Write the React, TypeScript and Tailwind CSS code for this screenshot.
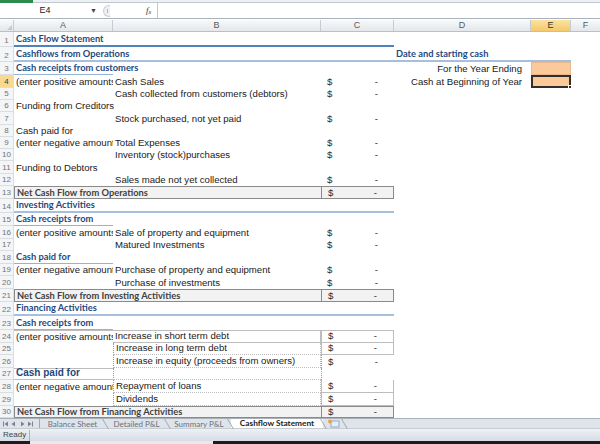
import React from 'react';

type Kind = 'h1' | 'h2' | 'h3' | 'total' | 'plain' | 'big';

interface RowDef {
  n: number;
  h: string;
  kind: Kind;
  a?: string;
  b?: string;
  money?: boolean;
  boxB?: 'solid' | 'dotted';
  boxC?: 'solid' | 'dotted';
  topA?: boolean;
}

const ROWS: RowDef[] = [
  { n: 1, h: 'h-[15px]', kind: 'h1', a: 'Cash Flow Statement' },
  { n: 2, h: 'h-[15px]', kind: 'h2', a: 'Cashflows from Operations' },
  { n: 3, h: 'h-[13px]', kind: 'h3', a: 'Cash receipts from customers' },
  { n: 4, h: 'h-[13px]', kind: 'plain', a: '(enter positive amounts)', b: 'Cash Sales', money: true },
  { n: 5, h: 'h-[12px]', kind: 'plain', b: 'Cash collected from customers (debtors)', money: true },
  { n: 6, h: 'h-[12px]', kind: 'plain', a: 'Funding from Creditors' },
  { n: 7, h: 'h-[13px]', kind: 'plain', b: 'Stock purchased, not yet paid', money: true },
  { n: 8, h: 'h-[12px]', kind: 'plain', a: 'Cash paid for' },
  { n: 9, h: 'h-[12px]', kind: 'plain', a: '(enter negative amounts)', b: 'Total Expenses', money: true },
  { n: 10, h: 'h-[12px]', kind: 'plain', b: 'Inventory (stock)purchases', money: true },
  { n: 11, h: 'h-[13px]', kind: 'plain', a: 'Funding to Debtors' },
  { n: 12, h: 'h-[12px]', kind: 'plain', b: 'Sales made not yet collected', money: true },
  { n: 13, h: 'h-[13px]', kind: 'total', a: 'Net Cash Flow from Operations' },
  { n: 14, h: 'h-[14px]', kind: 'h2', a: 'Investing Activities' },
  { n: 15, h: 'h-[13px]', kind: 'h3', a: 'Cash receipts from' },
  { n: 16, h: 'h-[13px]', kind: 'plain', a: '(enter positive amounts)', b: 'Sale of property and equipment', money: true },
  { n: 17, h: 'h-[12px]', kind: 'plain', b: 'Matured Investments', money: true },
  { n: 18, h: 'h-[13px]', kind: 'h3', a: 'Cash paid for' },
  { n: 19, h: 'h-[12px]', kind: 'plain', a: '(enter negative amounts)', b: 'Purchase of property and equipment', money: true },
  { n: 20, h: 'h-[13px]', kind: 'plain', b: 'Purchase of investments', money: true },
  { n: 21, h: 'h-[13px]', kind: 'total', a: 'Net Cash Flow from Investing Activities' },
  { n: 22, h: 'h-[14px]', kind: 'h2', a: 'Financing Activities' },
  { n: 23, h: 'h-[14px]', kind: 'h3', a: 'Cash receipts from' },
  { n: 24, h: 'h-[13px]', kind: 'plain', a: '(enter positive amounts)', b: 'Increase in short term debt', money: true, boxB: 'solid', boxC: 'solid', topA: true },
  { n: 25, h: 'h-[12px]', kind: 'plain', b: 'Increase in long term debt', money: true, boxB: 'solid', boxC: 'solid' },
  { n: 26, h: 'h-[13px]', kind: 'plain', b: 'Increase in equity (proceeds from owners)', money: true, boxB: 'solid', boxC: 'dotted' },
  { n: 27, h: 'h-[12px]', kind: 'big', a: 'Cash paid for', boxB: 'dotted', boxC: 'dotted' },
  { n: 28, h: 'h-[13px]', kind: 'plain', a: '(enter negative amounts)', b: 'Repayment of loans', money: true, boxB: 'solid', boxC: 'solid' },
  { n: 29, h: 'h-[13px]', kind: 'plain', b: 'Dividends', money: true, boxB: 'solid', boxC: 'solid' },
  { n: 30, h: 'h-[12px]', kind: 'total', a: 'Net Cash Flow from Financing Activities' },
];

const ARIAL = "font-['Liberation_Sans',Arial,sans-serif]";
const CALIBRI = "font-['Lato','Open_Sans',sans-serif]";

function Money() {
  return (
    <div className={`flex w-full items-end justify-between text-[9.6px] leading-[11px] text-[#2b2b2b] ${ARIAL}`}>
      <span className="pl-[6px]">$</span>
      <span className="pr-[16px]">-</span>
    </div>
  );
}

function RowHeader({ n, h }: { n: number; h: string }) {
  const active = n === 4;
  return (
    <div
      className={`${h} flex w-[14px] shrink-0 items-end justify-center border-b border-r border-[#dadde1] pb-[1px] text-[8px] leading-[9px] ${ARIAL} ${
        active ? 'bg-[#f8d98f] text-[#3b3b3b]' : 'bg-[#f4f5f7] text-[#6f747a]'
      }`}
    >
      {n}
    </div>
  );
}

function SheetRow({ r }: { r: RowDef }) {
  if (r.kind === 'total') {
    return (
      <div className="flex">
        <RowHeader n={r.n} h={r.h} />
        <div
          className={`${r.h} flex w-[307px] shrink-0 items-end whitespace-nowrap border-y border-l border-[#8a8a8a] bg-[#f2f2f2] pl-[2px] text-[9.3px] font-bold leading-[11px] text-[#3f3f3f] ${CALIBRI}`}
        >
          {r.a}
        </div>
        <div className={`${r.h} flex w-[73px] shrink-0 items-end border border-[#8a8a8a] bg-[#f2f2f2]`}>
          <Money />
        </div>
      </div>
    );
  }

  const heading = r.kind === 'h1' || r.kind === 'h2' || r.kind === 'h3';
  const aText = heading
    ? `text-[9.3px] font-bold text-[#1f497d] ${CALIBRI} overflow-visible relative z-10`
    : r.kind === 'big'
    ? `text-[10px] font-bold text-[#1f497d] ${ARIAL}`
    : `text-[9.6px] text-[#1a1a1a] ${ARIAL} ${r.b ? 'overflow-hidden' : 'overflow-visible relative z-10'}`;

  // heading lines sit inside every cell so the row keeps its height
  const line =
    r.kind === 'h1' ? 'border-b-2 border-[#4f81bd]' : r.kind === 'h2' ? 'border-b-2 border-[#a7bfde]' : '';

  const aBorder =
    r.kind === 'h3'
      ? 'border-b border-[#95b3d7]'
      : r.kind === 'big'
      ? 'border-y border-[#bdbdbd]'
      : r.topA
      ? 'border-t border-[#bdbdbd]'
      : '';

  const bBorder =
    r.boxB === 'solid'
      ? `border-b border-r border-[#bdbdbd] ${r.n === 24 ? 'border-t' : ''}`
      : r.boxB === 'dotted'
      ? 'border-b border-[#bdbdbd]'
      : '';

  const bLeft = r.boxB && r.n !== 24 ? 'border-l border-dotted border-l-[#9a9a9a]' : '';

  const cBorder =
    r.boxC === 'solid'
      ? `border-x border-b border-[#bdbdbd] ${r.n === 24 ? 'border-t' : ''}`
      : r.boxC === 'dotted'
      ? 'border-l border-dotted border-[#9a9a9a]'
      : '';

  return (
    <div className="flex">
      <RowHeader n={r.n} h={r.h} />
      <div
        className={`${r.h} flex w-[99px] shrink-0 items-end whitespace-nowrap pb-[1px] pl-[2px] leading-[11px] ${aText} ${aBorder} ${line}`}
      >
        {r.a}
      </div>
      <div
        className={`${r.h} flex w-[208px] shrink-0 items-end whitespace-nowrap pb-[1px] pl-[2px] text-[9.6px] leading-[11px] text-[#1a1a1a] ${ARIAL} ${bBorder} ${bLeft} ${line}`}
      >
        {r.b}
      </div>
      <div className={`${r.h} flex w-[73px] shrink-0 items-end pb-[1px] ${cBorder} ${line}`}>{r.money && <Money />}</div>
      <RightSide r={r} />
    </div>
  );
}

function RightSide({ r }: { r: RowDef }) {
  if (r.n === 2) {
    return (
      <div className={`${r.h} flex w-[177px] shrink-0 items-end border-b-2 border-[#a7bfde] pb-[1px] pl-[2px]`}>
        <span className={`text-[9.3px] font-bold leading-[11px] text-[#1f497d] ${CALIBRI}`}>Date and starting cash</span>
      </div>
    );
  }
  if (r.n === 3 || r.n === 4) {
    const label = r.n === 3 ? 'For the Year Ending' : 'Cash at Beginning of Year';
    return (
      <div className="flex">
        <div
          className={`${r.h} flex w-[137px] shrink-0 items-end justify-end pb-[1px] pr-[9px] text-[9.6px] leading-[11px] text-[#1a1a1a] ${ARIAL}`}
        >
          {label}
        </div>
        {r.n === 3 ? (
          <div className={`${r.h} w-[40px] shrink-0 border border-[#e9b98c] bg-[#fcc99b]`} />
        ) : (
          <div className={`${r.h} relative w-[40px] shrink-0 border-2 border-[#2f2f2f] bg-[#fcc99b]`}>
            <div className="absolute -bottom-[3px] -right-[3px] h-[4px] w-[4px] border border-white bg-[#2f2f2f]" />
          </div>
        )}
      </div>
    );
  }
  return null;
}

function NavArrows() {
  return (
    <svg width="38" height="10" viewBox="0 0 38 10" className="shrink-0">
      <rect x="3" y="2.5" width="1" height="5" fill="#7b838c" />
      <path d="M8 2.5 L4.5 5 L8 7.5 Z" fill="#7b838c" />
      <path d="M15 2.5 L11.5 5 L15 7.5 Z" fill="#7b838c" />
      <path d="M21 2.5 L24.5 5 L21 7.5 Z" fill="#7b838c" />
      <path d="M28 2.5 L31.5 5 L28 7.5 Z" fill="#7b838c" />
      <rect x="32" y="2.5" width="1" height="5" fill="#7b838c" />
    </svg>
  );
}

function Slant() {
  return <span className="h-[10px] w-px shrink-0 skew-x-[30deg] bg-[#a0a7b0]" />;
}

const TABS = [
  { name: 'Balance Sheet', w: 'w-[65px]' },
  { name: 'Detailed P&L', w: 'w-[61px]' },
  { name: 'Summary P&L', w: 'w-[62px]' },
];

function App() {
  const headers = [
    { label: 'A', w: 'w-[99px]' },
    { label: 'B', w: 'w-[208px]' },
    { label: 'C', w: 'w-[73px]' },
    { label: 'D', w: 'w-[137px]' },
    { label: 'E', w: 'w-[40px]' },
  ];

  return (
    <div className={`flex h-[444px] w-[600px] flex-col overflow-hidden bg-white ${ARIAL}`}>
      {/* ribbon edge */}
      <div className="flex h-[3px] shrink-0">
        <div className="w-[33px] bg-[#2e8b4e]" />
        <div className="flex-1 border-b border-[#c2c8cf] bg-[#eef1f4]" />
      </div>

      {/* formula bar */}
      <div className="flex h-[16px] shrink-0 items-center border-b border-[#a9b1ba] bg-white">
        <div className="flex h-full w-[100px] shrink-0 items-center">
          <span className="w-[90px] text-center text-[9px] text-[#222]">E4</span>
          <span className="text-[7px] leading-none text-[#444]">▼</span>
        </div>
        <div className="flex h-full w-[57px] shrink-0 items-center">
          <div className="ml-[3px] flex h-[12px] w-[7px] items-center justify-center rounded-l-full border border-r-0 border-[#c9ced4] bg-[#eef0f3]">
            <span className="h-[4px] w-px bg-[#b0b6bd]" />
          </div>
          <span className="ml-[36px] font-['Liberation_Serif',serif] text-[9px] italic text-[#333]">
            f<sub className="text-[6px]">x</sub>
          </span>
        </div>
        <div className="h-full flex-1 border-l border-[#c2c8cf]" />
      </div>

      {/* column headers */}
      <div className="mt-[1px] flex h-[12px] shrink-0 border-b border-[#b9c0c8] bg-gradient-to-b from-[#f7f8fa] to-[#e4e7eb]">
        <div className="relative w-[14px] shrink-0 border-r border-[#c6cbd1]">
          <svg width="5" height="5" viewBox="0 0 5 5" className="absolute bottom-[1px] right-[1px]">
            <path d="M5 0 L5 5 L0 5 Z" fill="#c3c8ce" />
          </svg>
        </div>
        {headers.map(h => (
          <div
            key={h.label}
            className={`${h.w} flex shrink-0 items-center justify-center border-r border-[#c6cbd1] text-[9px] leading-none ${
              h.label === 'E' ? 'bg-gradient-to-b from-[#fbe3a0] to-[#f4c96a] text-[#333]' : 'text-[#555a60]'
            }`}
          >
            {h.label}
          </div>
        ))}
        <div className="flex flex-1 items-center justify-center text-[9px] leading-none text-[#555a60]">F</div>
      </div>

      {/* grid */}
      <div className="flex h-[386px] shrink-0 flex-col overflow-hidden">
        {ROWS.map(r => (
          <SheetRow key={r.n} r={r} />
        ))}
      </div>

      {/* sheet tabs */}
      <div className="flex h-[10px] shrink-0 items-center border-t border-[#a8b0b9] bg-[#dfe4ea] text-[8px] leading-none">
        <NavArrows />
        <span className="ml-[1px] h-[10px] w-px bg-[#a0a7b0]" />
        {TABS.map(t => (
          <React.Fragment key={t.name}>
            <span className={`${t.w} shrink-0 text-center text-[#6a7179] ${CALIBRI}`}>{t.name}</span>
            <Slant />
          </React.Fragment>
        ))}
        <div
          className={`flex h-full w-[92px] shrink-0 items-center justify-center bg-white text-[8.3px] font-bold text-[#222] ${CALIBRI}`}
        >
          Cashflow Statement
        </div>
        <Slant />
        <svg width="14" height="9" viewBox="0 0 14 9" className="ml-[3px] shrink-0">
          <rect x="4" y="2" width="8" height="6" fill="#e8eef6" stroke="#7d9cc0" strokeWidth="0.8" />
          <circle cx="3" cy="2.5" r="2" fill="#e9a24c" />
        </svg>
        <span className="ml-[3px] flex items-center">
          <Slant />
        </span>
      </div>

      {/* status bar */}
      <div className="flex h-[13px] shrink-0 items-center border-t border-[#c5ccd4] bg-gradient-to-b from-[#eef1f5] to-[#d6dce4]">
        <span className="w-[29px] pl-[3px] text-[8px] leading-none text-[#3d444c]">Ready</span>
        <span className="h-[11px] w-px bg-[#aab2bb]" />
      </div>

      {/* taskbar edge */}
      <div className="flex h-[3px] shrink-0">
        <div className="w-[30px] bg-[#1c1c1c]" />
        <div className="w-[183px] bg-[#e9e9e9]" />
        <div className="flex-1 bg-[#1c1c1c]" />
      </div>
    </div>
  );
}

export default App;
